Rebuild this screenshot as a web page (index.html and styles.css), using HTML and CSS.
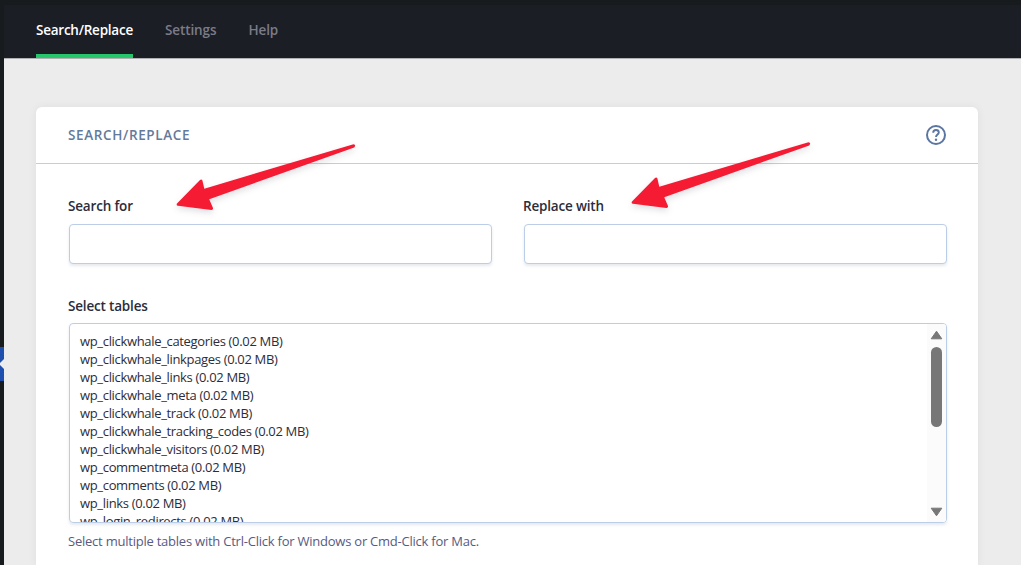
FILE: index.html
```html
<!DOCTYPE html>
<html lang="en">
<head>
    <meta charset="UTF-8">
    <meta name="viewport" content="width=device-width, initial-scale=1.0">
    <title>Search/Replace</title>
    <link rel="stylesheet" href="styles.css">
</head>
<body>
    <aside class="admin-menu">
        <div class="menu-current"></div>
    </aside>

    <div class="content">
        <nav class="tabs">
            <a class="tab active">Search/Replace</a>
            <a class="tab">Settings</a>
            <a class="tab">Help</a>
        </nav>

        <main class="page">
            <section class="card">
                <header class="card-header">
                    <h2>Search/Replace</h2>
                    <svg class="help-icon" width="20" height="20" viewBox="0 0 20 20" fill="none" stroke="currentColor">
                        <circle cx="10" cy="10" r="9" stroke-width="2"/>
                        <path d="M7.2 7.8c0-1.7 1.2-2.8 2.8-2.8s2.8 1 2.8 2.5c0 2-2.8 2.2-2.8 4.6" stroke-width="1.9"/>
                        <circle cx="10" cy="14.7" r="1.2" fill="currentColor" stroke="none"/>
                    </svg>
                </header>

                <div class="card-body">
                    <div class="fields">
                        <div class="field">
                            <label for="search">Search for</label>
                            <input type="text" id="search">
                        </div>
                        <div class="field">
                            <label for="replace">Replace with</label>
                            <input type="text" id="replace">
                        </div>
                    </div>

                    <div class="tables">
                        <label>Select tables</label>
                        <div class="listbox">
                            <ul class="options">
                                <li>wp_clickwhale_categories (0.02 MB)</li>
                                <li>wp_clickwhale_linkpages (0.02 MB)</li>
                                <li>wp_clickwhale_links (0.02 MB)</li>
                                <li>wp_clickwhale_meta (0.02 MB)</li>
                                <li>wp_clickwhale_track (0.02 MB)</li>
                                <li>wp_clickwhale_tracking_codes (0.02 MB)</li>
                                <li>wp_clickwhale_visitors (0.02 MB)</li>
                                <li>wp_commentmeta (0.02 MB)</li>
                                <li>wp_comments (0.02 MB)</li>
                                <li>wp_links (0.02 MB)</li>
                                <li>wp_login_redirects (0.02 MB)</li>
                            </ul>
                            <div class="scrollbar">
                                <svg width="13" height="10" viewBox="0 0 13 10"><path d="M6.5 1.2 11.8 8.8H1.2z"/></svg>
                                <div class="thumb"></div>
                                <svg class="down" width="13" height="10" viewBox="0 0 13 10"><path d="M6.5 8.8 1.2 1.2h10.6z"/></svg>
                            </div>
                        </div>
                        <p class="hint">Select multiple tables with Ctrl-Click for Windows or Cmd-Click for Mac.</p>
                    </div>
                </div>
            </section>
        </main>
    </div>

    <svg class="arrow arrow-search" width="180" height="70" viewBox="0 0 180 70">
        <path d="M177.5 1.2 28.3 45.7 26.4 37.4Q25.5 36 24 37L1 60.5Q0 62.5 2 62.8L35.5 67Q37.6 66.7 36.8 64.5L33.2 56.2 178.2 4.4Q180.5 1.5 177.5 1.2z"/>
    </svg>
    <svg class="arrow arrow-replace" width="180" height="70" viewBox="0 0 180 70">
        <path d="M177.5 1.2 28.3 45.7 26.4 37.4Q25.5 36 24 37L1 60.5Q0 62.5 2 62.8L35.5 67Q37.6 66.7 36.8 64.5L33.2 56.2 178.2 4.4Q180.5 1.5 177.5 1.2z"/>
    </svg>
</body>
</html>
```
FILE: styles.css
```css
* {
    margin: 0;
    padding: 0;
    box-sizing: border-box;
}

body {
    font-family: 'Open Sans', 'Noto Sans', sans-serif;
    font-size: 13px;
    color: #2b2d3a;
    background: #181b1d;
    height: 100vh;
    padding-top: 5px;
    display: flex;
    overflow: hidden;
}

/* Edge of the collapsed admin menu */
.admin-menu {
    width: 4px;
    padding-top: 342px;
}

.menu-current {
    height: 34px;
    background: linear-gradient(#1f4fae, #1f4fae);
    position: relative;
}

.menu-current::after {
    content: '';
    position: absolute;
    inset: 0;
    background: #ececed;
    clip-path: polygon(100% 12px, 0 16px, 0 18px, 100% 22px);
}

.content {
    flex: 1;
    background: #ececed;
}

.tabs {
    height: 54px;
    padding: 0 32px;
    display: flex;
    gap: 32px;
    background: #1c1e26;
    border-bottom: 1px solid #b0b1b5;
}

.tab {
    line-height: 18px;
    padding-top: 16px;
    border-bottom: 4px solid transparent;
    font-size: 13.5px;
    font-weight: 600;
    letter-spacing: -0.1px;
    color: #7b7b88;
}

.tab.active {
    letter-spacing: -0.24px;
    color: #fff;
    border-bottom-color: #26c66c;
}

.page {
    padding: 48px 43px 0 32px;
}

.card {
    height: 458px;
    background: #fff;
    border-radius: 6px 6px 0 0;
    box-shadow: 0 0 10px rgba(0, 0, 0, 0.06);
}

.card-header {
    height: 57px;
    padding: 0 32px;
    display: flex;
    align-items: center;
    justify-content: space-between;
    border-bottom: 1px solid #c2cde2;
}

.card-header h2 {
    font-size: 13.5px;
    font-weight: 600;
    letter-spacing: 0.63px;
    text-transform: uppercase;
    color: #647a9b;
}

.help-icon {
    color: #5b76a0;
}

.card-body {
    padding: 32px 31px 0 32px;
}

.fields {
    display: flex;
    gap: 31px;
}

.field {
    flex: 1;
}

label {
    display: block;
    line-height: 20px;
    font-size: 13.5px;
    font-weight: 600;
    letter-spacing: -0.18px;
}

.field input {
    display: block;
    width: calc(100% - 1px);
    height: 40px;
    margin: 8px 0 0 1px;
    padding: 0 12px;
    border: 1px solid #bccde8;
    border-radius: 4px;
    box-shadow: 0 2px 3px rgba(60, 70, 110, 0.12);
    font: inherit;
}

.tables {
    margin-top: 32px;
}

.listbox {
    height: 200px;
    margin: 7px 0 0 1px;
    display: flex;
    border: 1px solid #bccde8;
    border-radius: 4px;
    box-shadow: 0 2px 3px rgba(60, 70, 110, 0.12);
    overflow: hidden;
}

.options {
    flex: 1;
    padding: 8px 10px 0;
    list-style: none;
    line-height: 18px;
    letter-spacing: -0.33px;
}

.scrollbar {
    width: 19px;
    padding: 6px 0 5px;
    display: flex;
    flex-direction: column;
    align-items: center;
    background: #fbfbfb;
}

.scrollbar svg {
    fill: #777;
    stroke: #777;
    stroke-width: 1;
    stroke-linejoin: round;
}

.scrollbar .down {
    margin-top: auto;
}

.thumb {
    width: 11px;
    height: 80px;
    margin-top: 7px;
    border-radius: 6px;
    background: #777;
}

.hint {
    margin-top: 8px;
    line-height: 20px;
    letter-spacing: -0.23px;
    color: #585a82;
}

/* Callout arrows drawn over the form */
.arrow {
    position: absolute;
    fill: #f51b33;
    overflow: visible;
    filter: drop-shadow(0 3px 3px rgba(40, 40, 70, 0.15));
}

.arrow-search {
    left: 176px;
    top: 143px;
}

.arrow-replace {
    left: 631px;
    top: 141px;
}
```
